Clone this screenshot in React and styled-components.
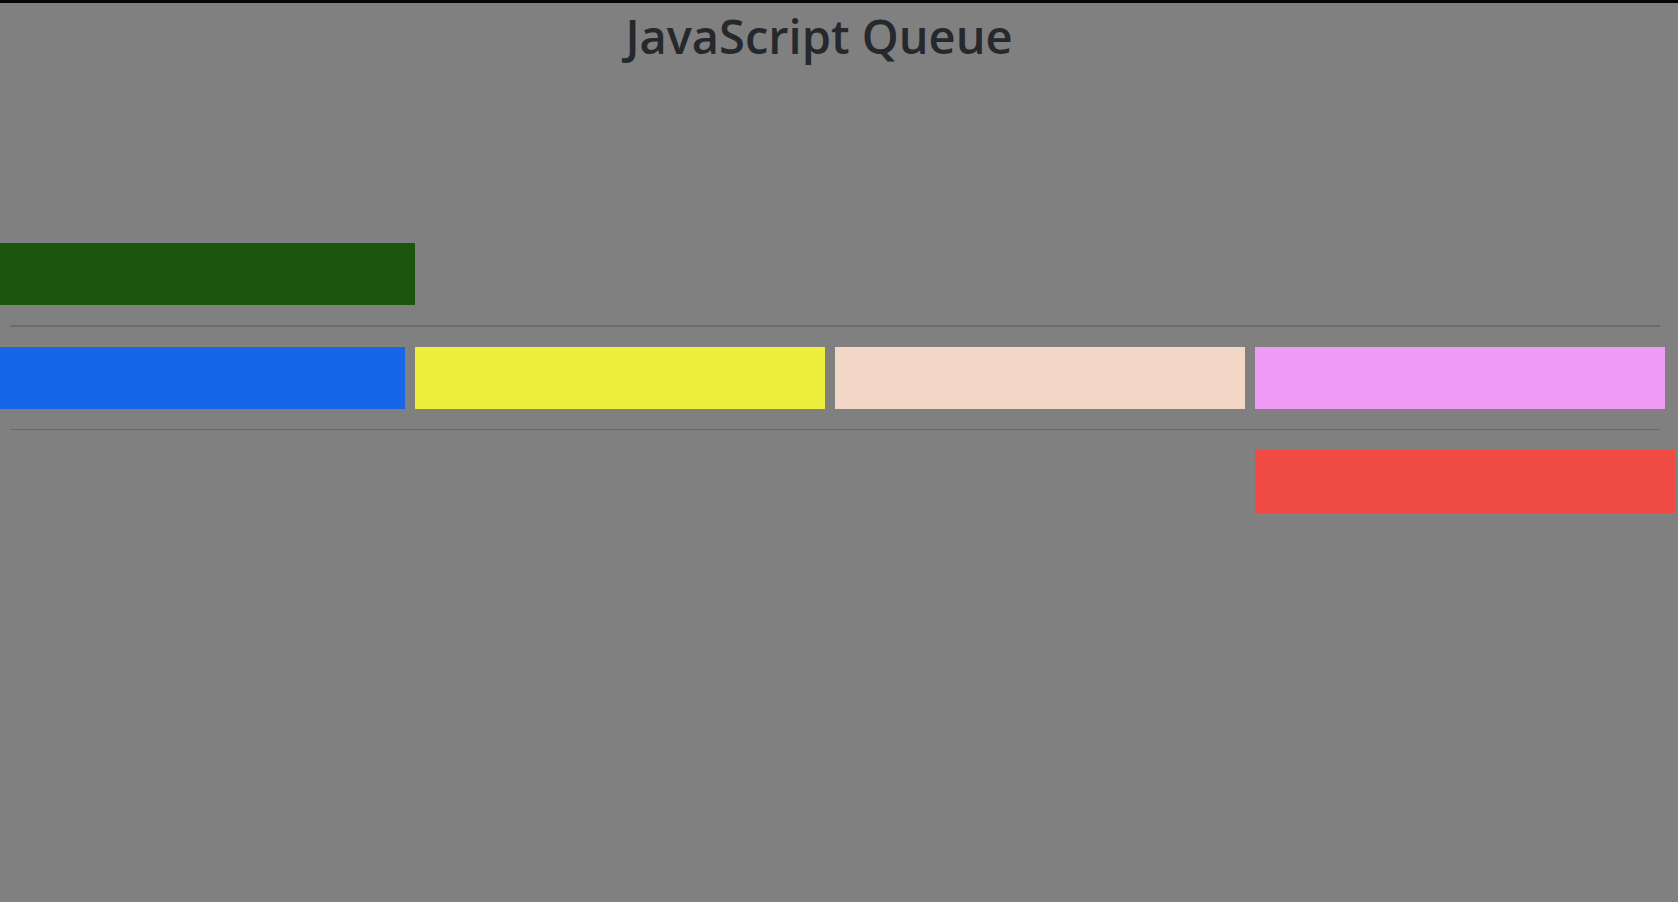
import React from "react";
import styled, { createGlobalStyle } from "styled-components";

var Global = createGlobalStyle`
  html, body {
    margin: 0;
    padding: 0;
    background: #808080;
    overflow: hidden;
  }
`;

var Page = styled.div`
  width: 1678px;
  height: 902px;
  background: #808080;
  overflow: hidden;
`;

var TopBar = styled.div`
  height: 3px;
  background: #050608;
`;

var Title = styled.h1`
  margin: 0;
  padding-right: 40px;
  height: 70px;
  text-align: center;
  font-family: "Open Sans", "Noto Sans", sans-serif;
  font-weight: 600;
  font-size: 47px;
  line-height: 67px;
  color: #25282c;
`;

var Lanes = styled.div`
  padding-top: 170px;
`;

var Lane = styled.div`
  display: grid;
  grid-template-columns: repeat(4, 410px);
  column-gap: 10px;
  margin-left: -5px;
  height: ${p => p.h || 62}px;
`;

var Block = styled.div`
  grid-column: ${p => p.col};
  width: ${p => p.w || 410}px;
  height: 100%;
  background: ${p => p.color};
`;

var Divider = styled.hr`
  margin: 20px 18px 20px 10px;
  border: 0;
  height: ${p => p.thick}px;
  background: #6a6a6a;
`;

var queue = ["#1866e8", "#eeee3c", "#f2d6c6", "#ef9bf6"];

export default function App() {
  return (
    <Page>
      <Global />
      <TopBar />
      <Title>JavaScript Queue</Title>
      <Lanes>
        <Lane>
          <Block col={1} w={420} color="#1c560e" />
        </Lane>
        <Divider thick={2} />
        <Lane>
          {queue.map((c, i) => (
            <Block key={c} col={i + 1} color={c} />
          ))}
        </Lane>
        <Divider thick={1} />
        <Lane h={63}>
          <Block col={4} w={420} color="#ef4b44" />
        </Lane>
      </Lanes>
    </Page>
  );
}
